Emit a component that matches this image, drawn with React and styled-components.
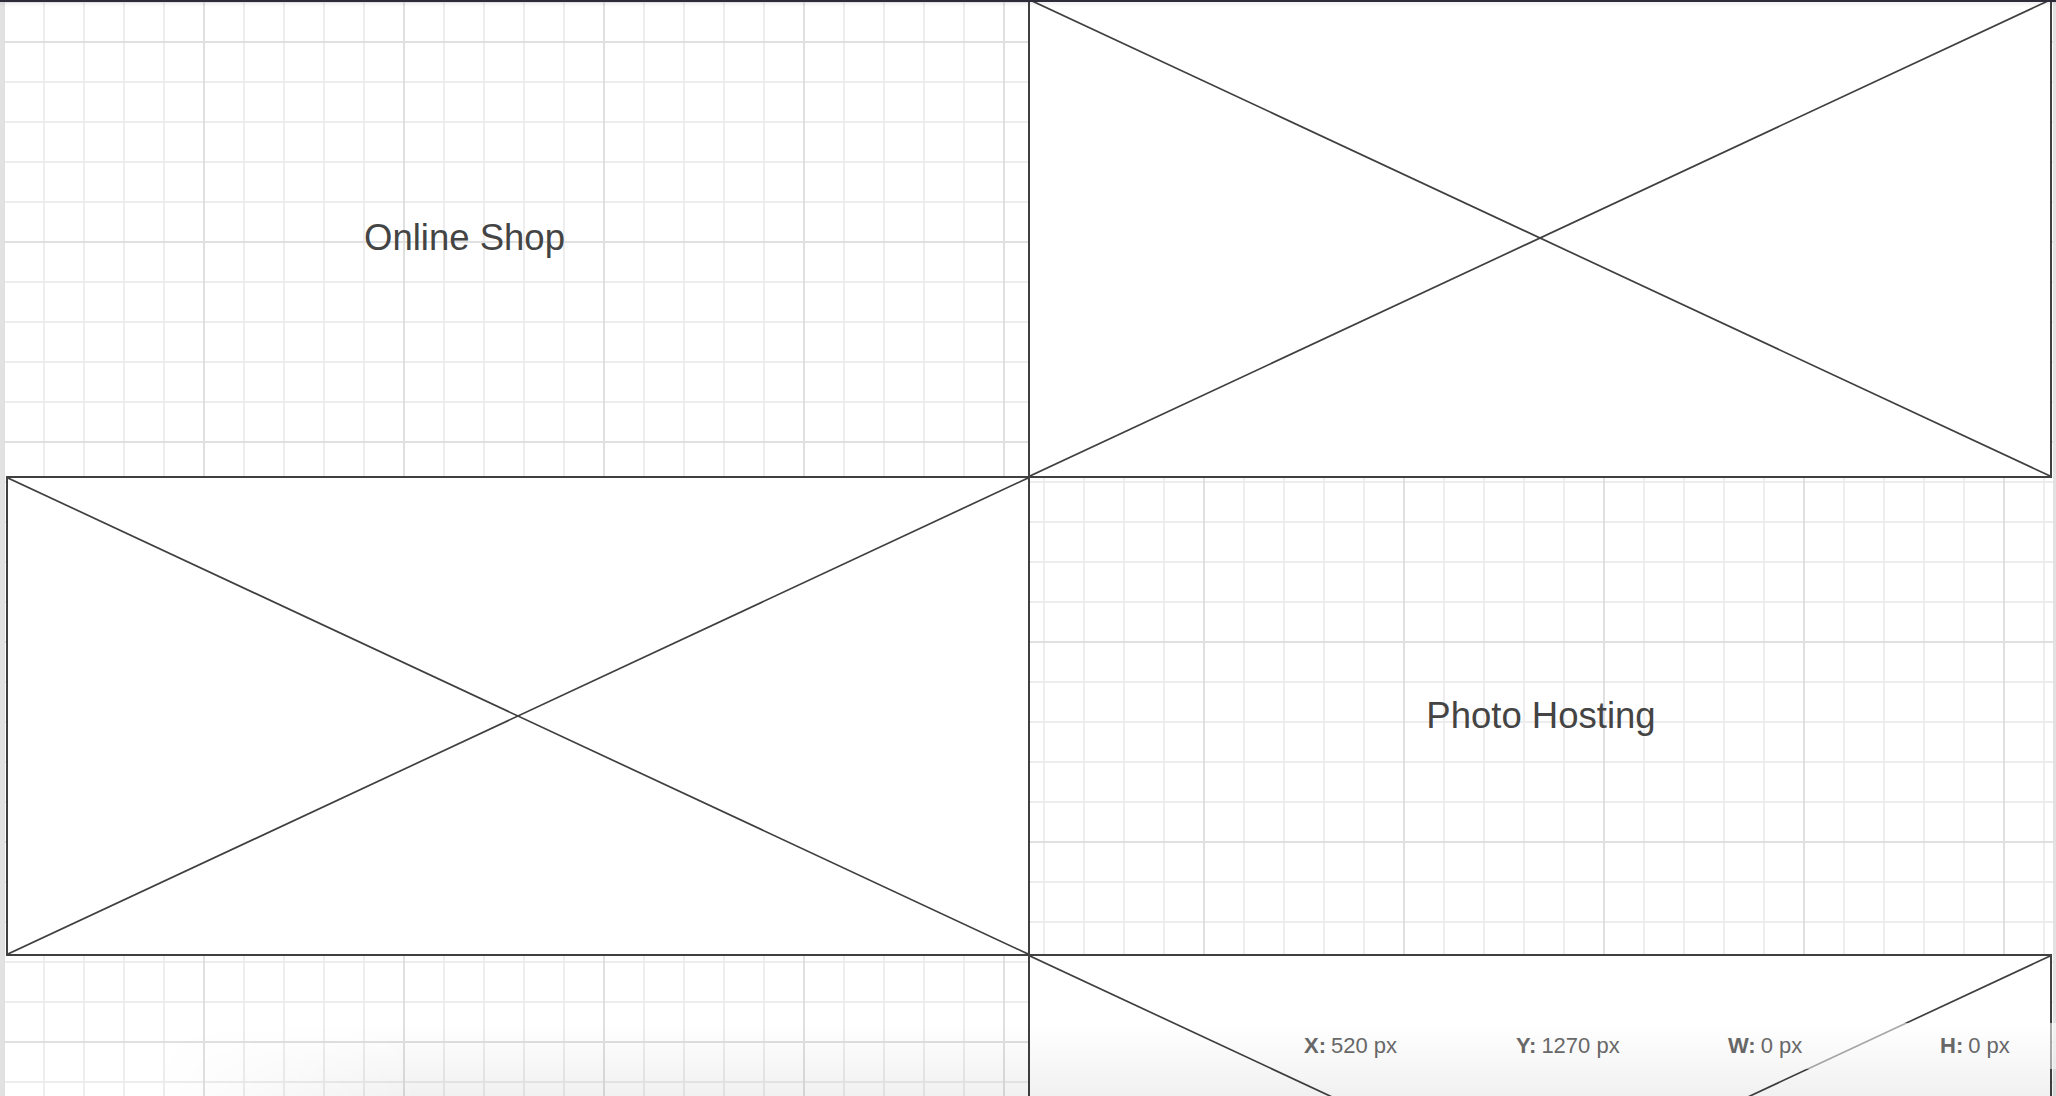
import React from "react";
import styled, { createGlobalStyle } from "styled-components";

const GlobalStyle = createGlobalStyle`
  html, body {
    margin: 0;
    padding: 0;
    overflow: hidden;
    background: #fff;
  }
  body {
    font-family: "Liberation Sans", Arial, sans-serif;
  }
`;

const Page = styled.div`
  position: relative;
  width: 2056px;
  height: 1096px;
  overflow: hidden;
`;

const TopBar = styled.div`
  position: absolute;
  top: 0;
  left: 0;
  right: 0;
  height: 2px;
  background: #2c2d38;
  box-shadow: 0 1px 4px rgba(0, 0, 0, 0.16);
  z-index: 3;
`;

const Canvas = styled.main`
  box-sizing: border-box;
  height: 100%;
  overflow: hidden;
  border-left: 3px solid #e2e2e2;
  border-right: 3px solid #e2e2e2;
  background-color: #fff;
  background-origin: border-box;
  background-image:
    linear-gradient(to right, #e0e0e0 2px, transparent 2px),
    linear-gradient(to bottom, #e0e0e0 2px, transparent 2px),
    linear-gradient(to right, #ededed 2px, transparent 2px),
    linear-gradient(to bottom, #ededed 2px, transparent 2px);
  background-size: 200px 200px, 200px 200px, 40px 40px, 40px 40px;
  background-position: 3px 0, 0 41px, 3px 0, 0 1px;
`;

const Board = styled.div`
  display: grid;
  grid-template-columns: repeat(2, 1022px);
  grid-auto-rows: 478px;
  margin: -2px 0 0 3px;
`;

const Label = styled.div`
  display: flex;
  align-items: center;
  justify-content: center;
  padding: 2px ${(p) => (p.$shift < 0 ? -p.$shift : 0)}px 0
    ${(p) => (p.$shift > 0 ? p.$shift : 0)}px;
  font-size: 36.5px;
  color: #444;
  white-space: nowrap;
`;

const Placeholder = styled.div`
  position: relative;
  z-index: 1;
  box-sizing: border-box;
  width: calc(100% + 2px);
  height: calc(100% + 2px);
  background: #fff;
  border: 2px solid #404040;
`;

const Cross = styled.svg`
  display: block;
  width: 100%;
  height: 100%;
`;

const StatusBar = styled.footer`
  position: absolute;
  left: 0;
  right: 0;
  bottom: 0;
  z-index: 2;
  box-sizing: border-box;
  height: 73px;
  display: flex;
  align-items: flex-start;
  gap: 26px;
  padding: 0 0 27px 1298px;

  &::after {
    content: "";
    position: absolute;
    inset: 0;
    pointer-events: none;
    background: linear-gradient(to bottom, rgba(0, 0, 0, 0) 0%, rgba(0, 0, 0, 0.055) 100%);
    -webkit-mask-image: linear-gradient(to right, transparent 150px, #000 420px);
    mask-image: linear-gradient(to right, transparent 150px, #000 420px);
  }
`;

const Field = styled.div`
  flex: none;
  box-sizing: border-box;
  width: 186px;
  height: 46px;
  display: flex;
  align-items: center;
  padding: 0 6px;
  background: rgba(255, 255, 255, 0.55);
  font-size: 22px;
  color: #6a6a6a;
`;

const FieldName = styled.b`
  font-weight: bold;
  margin-right: 5px;
`;

const ImageBox = () => (
  <Placeholder>
    <Cross>
      <line x1="0" y1="0" x2="100%" y2="100%" stroke="#404040" strokeWidth="1.7" />
      <line x1="100%" y1="0" x2="0" y2="100%" stroke="#404040" strokeWidth="1.7" />
    </Cross>
  </Placeholder>
);

const fields = [
  { name: "X:", value: "520 px" },
  { name: "Y:", value: "1270 px" },
  { name: "W:", value: "0 px" },
  { name: "H:", value: "0 px" },
];

const App = () => {
  return (
    <Page>
      <GlobalStyle />
      <TopBar />
      <Canvas>
        <Board>
          <Label $shift={-105}>Online Shop</Label>
          <ImageBox />
          <ImageBox />
          <Label $shift={4}>Photo Hosting</Label>
          <Label />
          <ImageBox />
        </Board>
      </Canvas>
      <StatusBar>
        {fields.map((f) => (
          <Field key={f.name}>
            <FieldName>{f.name}</FieldName>
            {f.value}
          </Field>
        ))}
      </StatusBar>
    </Page>
  );
};

export default App;
